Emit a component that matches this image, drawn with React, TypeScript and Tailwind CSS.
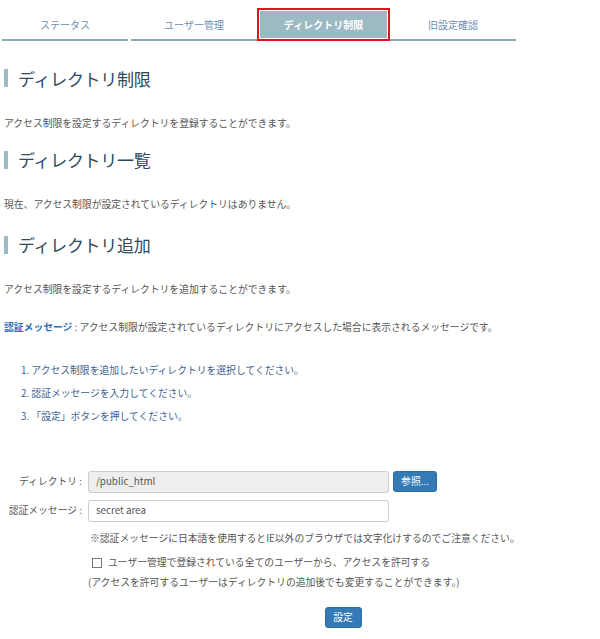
const jp = { fontFamily: '"Noto Sans CJK JP", "Noto Sans", sans-serif' };

function Heading({ children }: { children: React.ReactNode }) {
  return (
    <div className="flex items-center h-[22px]">
      <span className="w-[4px] h-[18px] bg-[#9bbcc5] ml-[4px]" />
      <h2 className="ml-[10px] text-[17px] leading-none text-[#2e4a5c] tracking-[-0.3px]">{children}</h2>
    </div>
  );
}

export default function App() {
  const tabs = ["ステータス", "ユーザー管理", "ディレクトリ制限", "旧設定確認"];

  return (
    <main className="w-[600px] h-[639px] bg-white text-[#555] overflow-hidden" style={jp}>
      {/* Tabs */}
      <div className="flex gap-[3px] pl-[2px] pt-[8px]">
        {tabs.map((t, i) =>
          i === 2 ? (
            <div key={t} className="w-[133px] h-[33px] border-2 border-[#e0141e] p-px -mx-[3px]">
              <div className="h-full bg-[#9bbac4] text-white text-[10px] font-bold flex items-center justify-center">
                {t}
              </div>
            </div>
          ) : (
            <div
              key={t}
              className="w-[126px] h-[33px] border-b-2 border-[#8fa9b3] text-[10px] text-[#6b8db4] flex items-center justify-center pt-px"
            >
              {t}
            </div>
          )
        )}
      </div>

      <div className="pt-[26px]">
        <Heading>ディレクトリ制限</Heading>
        <p className="mt-[30px] ml-[4px] text-[9.8px] leading-none">
          アクセス制限を設定するディレクトリを登録することができます。
        </p>

        <div className="mt-[20px]">
          <Heading>ディレクトリ一覧</Heading>
        </div>
        <p className="mt-[29px] ml-[4px] text-[9.8px] leading-none">
          現在、アクセス制限が設定されているディレクトリはありません。
        </p>

        <div className="mt-[24px]">
          <Heading>ディレクトリ追加</Heading>
        </div>
        <p className="mt-[29px] ml-[4px] text-[9.8px] leading-none">
          アクセス制限を設定するディレクトリを追加することができます。
        </p>
        <p className="mt-[29px] ml-[4px] text-[9.8px] leading-none">
          <span className="text-[#2e72b8] font-bold">認証メッセージ</span> : アクセス制限が設定されているディレクトリにアクセスした場合に表示されるメッセージです。
        </p>

        <ol className="mt-[33px] ml-[21px] text-[9.8px] leading-none text-[#3d5f8e] flex flex-col gap-[13px]">
          <li>1. アクセス制限を追加したいディレクトリを選択してください。</li>
          <li>2. 認証メッセージを入力してください。</li>
          <li>3. 「設定」ボタンを押してください。</li>
        </ol>

        {/* Form */}
        <div className="mt-[49px] flex flex-col gap-[7px] text-[9.8px]">
          <div className="flex items-center">
            <label className="w-[88px] text-right pr-[6px]">ディレクトリ :</label>
            <div className="w-[301px] h-[22px] bg-[#eee] border border-[#ccc] rounded-[3px] flex items-center px-[7px] text-[#555]">
              /public_html
            </div>
            <button className="ml-[4px] w-[44px] h-[21px] bg-[#337ab7] border border-[#2e6da4] rounded-[3px] text-white text-[9.8px] flex items-center justify-center">
              参照...
            </button>
          </div>
          <div className="flex items-center">
            <label className="w-[88px] text-right pr-[6px]">認証メッセージ :</label>
            <div className="w-[301px] h-[22px] bg-white border border-[#ccc] rounded-[3px] flex items-center px-[7px] text-[#555]">
              secret area
            </div>
          </div>
        </div>

        <p className="mt-[12px] ml-[90px] text-[9.8px] leading-none">
          ※認証メッセージに日本語を使用するとIE以外のブラウザでは文字化けするのでご注意ください。
        </p>

        <label className="mt-[15px] ml-[92px] flex items-center gap-[6px] text-[9.8px] leading-none">
          <span className="w-[10px] h-[10px] border border-[#777] bg-white" />
          ユーザー管理で登録されている全てのユーザーから、アクセスを許可する
        </label>
        <p className="mt-[10px] ml-[88px] text-[9.8px] leading-none">
          (アクセスを許可するユーザーはディレクトリの追加後でも変更することができます。)
        </p>

        <div className="mt-[19px] flex justify-center pl-[86px]">
          <button className="w-[37px] h-[21px] bg-[#337ab7] border border-[#2e6da4] rounded-[3px] text-white text-[9.8px] flex items-center justify-center">
            設定
          </button>
        </div>
      </div>
    </main>
  );
}
